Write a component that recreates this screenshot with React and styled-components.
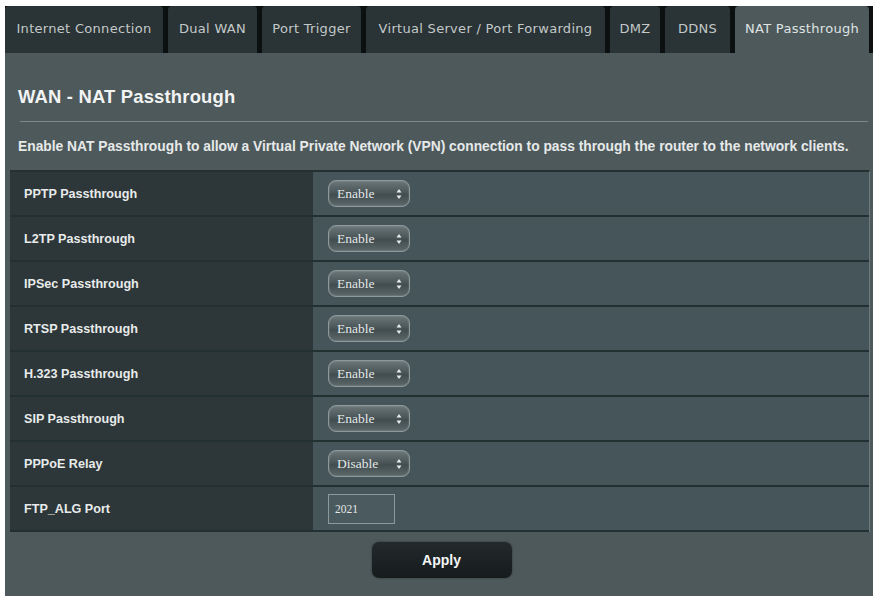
import React from "react";
import styled, { createGlobalStyle } from "styled-components";

const Global = createGlobalStyle`
  html, body { margin: 0; padding: 0; background: #ffffff; }
  body { font-family: "Liberation Sans", Arial, sans-serif; }
`;

const Frame = styled.div`
  margin: 6px 0 0 5px;
  width: 868px;
`;

const TabBar = styled.div`
  display: flex;
  gap: 5px;
  background: #0c1011;
  height: 47px;
`;

const Tab = styled.div`
  width: ${(p) => p.w}px;
  flex: none;
  display: flex;
  align-items: center;
  justify-content: center;
  border-radius: 4px 4px 0 0;
  background: ${(p) => (p.active ? "#4e595b" : "#2a3335")};
  color: ${(p) => (p.active ? "#dfe3e3" : "#c3c9c9")};
  font-family: "DejaVu Sans", Verdana, sans-serif;
  font-size: 13px;
  letter-spacing: 0.3px;
  padding-bottom: 2px;
  box-sizing: border-box;
  white-space: nowrap;
`;

const Panel = styled.div`
  background: #4e595b;
  padding: 0 3px 18px 5px;
  height: 543px;
  box-sizing: border-box;
  display: flex;
  flex-direction: column;
`;

const Header = styled.div`
  padding: 33px 2px 0 8px;
`;

const Title = styled.h1`
  margin: 0;
  font-size: 18.4px;
  line-height: 22px;
  font-weight: bold;
  color: #f2f4f4;
  letter-spacing: 0.2px;
`;

const Divider = styled.div`
  height: 1px;
  background: #7d8a8c;
  margin: 13px 0 0 2px;
`;

const Desc = styled.p`
  margin: 17px 0 0 0;
  padding-left: 8px;
  font-size: 13.8px;
  line-height: 16px;
  font-weight: bold;
  color: #e6e9e9;
  white-space: nowrap;
`;

const Table = styled.div`
  margin-top: 15px;
  display: flex;
  flex-direction: column;
  border-top: 2px solid #253032;
  border-right: 1px solid #6b7a7c;
`;

const Row = styled.div`
  display: grid;
  grid-template-columns: 303px 1fr;
  height: 45px;
  border-bottom: 2px solid #223032;
  box-sizing: border-box;
`;

const Label = styled.div`
  background: #2d3638;
  display: flex;
  align-items: center;
  padding-left: 14px;
  font-size: 12.6px;
  font-weight: bold;
  color: #e8ebeb;
`;

const Cell = styled.div`
  background: #465559;
  display: flex;
  align-items: center;
  padding-left: 15px;
`;

const Select = styled.div`
  width: 82px;
  height: 27px;
  box-sizing: border-box;
  border: 1px solid #8d999b;
  border-radius: 8px;
  background: linear-gradient(#6a7678, #4b5759 45%, #414d4f 55%, #5b6769);
  box-shadow: inset 0 0 2px rgba(255, 255, 255, 0.3);
  display: flex;
  align-items: center;
  justify-content: space-between;
  padding: 0 7px 0 8px;
  font-family: "Liberation Serif", "Times New Roman", serif;
  font-size: 13.5px;
  color: #e4e8e8;
`;

const Input = styled.div`
  width: 67px;
  height: 30px;
  box-sizing: border-box;
  border: 1px solid #8a9a9c;
  background: #4a5a5e;
  display: flex;
  align-items: center;
  padding-left: 6px;
  font-family: "Liberation Serif", "Times New Roman", serif;
  font-size: 11.5px;
  color: #e4e8e8;
`;

const Footer = styled.div`
  display: flex;
  justify-content: center;
  margin-top: 10px;
  padding-left: 3px;
`;

const Button = styled.button`
  width: 140px;
  height: 36px;
  border: none;
  border-radius: 7px;
  background: linear-gradient(#232a2c, #161b1c);
  box-shadow: 0 0 2px rgba(0, 0, 0, 0.5);
  color: #f4f6f6;
  font-family: "Liberation Sans", Arial, sans-serif;
  font-size: 14px;
  font-weight: bold;
`;

const Arrows = () => (
  <svg width="6" height="12" viewBox="0 0 6 12">
    <path d="M3 1 L5.5 4.5 L0.5 4.5 Z" fill="#e8ecec" />
    <path d="M3 11 L5.5 7.5 L0.5 7.5 Z" fill="#e8ecec" />
  </svg>
);

const tabs = [
  ["Internet Connection", 158],
  ["Dual WAN", 89],
  ["Port Trigger", 99],
  ["Virtual Server / Port Forwarding", 239],
  ["DMZ", 50],
  ["DDNS", 65],
  ["NAT Passthrough", 134, true],
];

const rows = [
  ["PPTP Passthrough", "Enable"],
  ["L2TP Passthrough", "Enable"],
  ["IPSec Passthrough", "Enable"],
  ["RTSP Passthrough", "Enable"],
  ["H.323 Passthrough", "Enable"],
  ["SIP Passthrough", "Enable"],
  ["PPPoE Relay", "Disable"],
];

export default function App() {
  return (
    <>
      <Global />
      <Frame>
        <TabBar>
          {tabs.map(([t, w, a]) => (
            <Tab key={t} w={w} active={a}>
              {t}
            </Tab>
          ))}
        </TabBar>
        <Panel>
          <Header>
            <Title>WAN - NAT Passthrough</Title>
            <Divider />
          </Header>
          <Desc>
            Enable NAT Passthrough to allow a Virtual Private Network (VPN) connection to pass through the router to the network clients.
          </Desc>
          <Table>
            {rows.map(([l, v]) => (
              <Row key={l}>
                <Label>{l}</Label>
                <Cell>
                  <Select>
                    <span>{v}</span>
                    <Arrows />
                  </Select>
                </Cell>
              </Row>
            ))}
            <Row>
              <Label>FTP_ALG Port</Label>
              <Cell>
                <Input>2021</Input>
              </Cell>
            </Row>
          </Table>
          <Footer>
            <Button>Apply</Button>
          </Footer>
        </Panel>
      </Frame>
    </>
  );
}
